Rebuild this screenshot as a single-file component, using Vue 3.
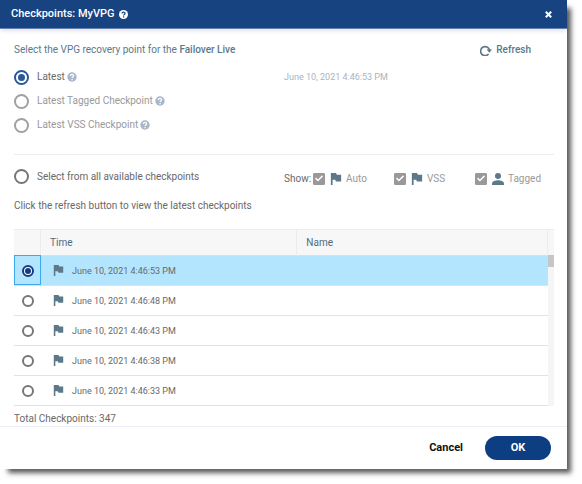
<script setup>
import { ref } from 'vue'

const FLAG = 'M1 0h6l1 2h5v8H7L6 8H3v6H1z'

const mode = ref('latest')
const selected = ref(0)

const latestOptions = [
  { id: 'latest', label: 'Latest', muted: false, time: 'June 10, 2021 4:46:53 PM' },
  { id: 'tagged', label: 'Latest Tagged Checkpoint', muted: true },
  { id: 'vss', label: 'Latest VSS Checkpoint', muted: true }
]

const filters = ref([
  { id: 'auto', label: 'Auto', icon: 'flag', on: true },
  { id: 'vss', label: 'VSS', icon: 'flag', on: true },
  { id: 'tagged', label: 'Tagged', icon: 'person', on: true }
])

const rows = [
  'June 10, 2021 4:46:53 PM',
  'June 10, 2021 4:46:48 PM',
  'June 10, 2021 4:46:43 PM',
  'June 10, 2021 4:46:38 PM',
  'June 10, 2021 4:46:33 PM'
]
</script>

<template>
  <main class="dialog">
    <header class="titlebar">
      <h1>Checkpoints: MyVPG</h1>
      <svg class="help" viewBox="0 0 10 10" aria-hidden="true">
        <circle cx="5" cy="5" r="5" fill="#fff" />
        <path d="M3.3 4C3.3 1.7 6.7 1.8 6.7 3.8C6.7 5 5.1 4.9 5.1 6.2M5.1 7v1.3" fill="none" stroke="#174480" stroke-width="1.4" />
      </svg>
      <button class="close" type="button" aria-label="Close">
        <svg viewBox="0 0 6 6"><path d="M.7.7l4.6 4.6M5.3.7L.7 5.3" stroke="#fff" stroke-width="1.7" /></svg>
      </button>
    </header>

    <div class="content">
      <div class="intro">
        <p>Select the VPG recovery point for the <b>Failover Live</b></p>
        <button class="refresh" type="button">
          <svg viewBox="0 0 12 11"><path d="M8.6 9A4.5 4.5 0 1 1 9.5 5" fill="none" stroke="#5c7889" stroke-width="1.7" /><path d="M6.6 4.6H12L9.4 7.7z" fill="#5c7889" /></svg>
          Refresh
        </button>
      </div>

      <div v-for="o in latestOptions" :key="o.id" class="option">
        <div class="pick">
          <input :id="o.id" v-model="mode" class="radio" :class="{ muted: o.muted }" type="radio" name="mode" :value="o.id" />
          <label :for="o.id" :class="{ muted: o.muted }">{{ o.label }}</label>
          <svg class="hint" viewBox="0 0 10 10" aria-hidden="true">
            <circle cx="5" cy="5" r="4.7" fill="#a9b8c8" />
            <path d="M3.4 3.9C3.4 1.8 6.6 1.9 6.6 3.8C6.6 4.9 5.1 4.9 5.1 6.1M5.1 7v1.2" fill="none" stroke="#fff" stroke-width="1.3" />
          </svg>
        </div>
        <time v-if="o.time">{{ o.time }}</time>
      </div>

      <div class="choose">
        <div class="pick">
          <input id="all" v-model="mode" class="radio" type="radio" name="mode" value="all" />
          <label for="all">Select from all available checkpoints</label>
        </div>
        <div class="filters">
          <span class="show">Show:</span>
          <div v-for="f in filters" :key="f.id" class="filter">
            <input :id="'f-' + f.id" v-model="f.on" class="check" type="checkbox" />
            <svg v-if="f.icon === 'flag'" class="flag" viewBox="0 0 14 14"><path :d="FLAG" /></svg>
            <svg v-else class="person" viewBox="0 0 12 12"><circle cx="6" cy="3" r="3" /><path d="M0 12V10.4C0 8.4 3.6 7.2 6 7.2S12 8.4 12 10.4V12z" /></svg>
            <label :for="'f-' + f.id">{{ f.label }}</label>
          </div>
        </div>
      </div>

      <p class="note">Click the refresh button to view the latest checkpoints</p>

      <div class="grid">
        <table>
          <thead>
            <tr><th class="sel"></th><th class="time">Time</th><th>Name</th></tr>
          </thead>
          <tbody>
            <tr v-for="(r, i) in rows" :key="r" :class="{ active: selected === i }">
              <td class="sel"><input v-model="selected" class="radio small" type="radio" name="row" :value="i" :aria-label="r" /></td>
              <td class="time">
                <div class="stamp">
                  <svg class="flag" viewBox="0 0 14 14"><path :d="FLAG" /></svg>
                  <span>{{ r }}</span>
                </div>
              </td>
              <td></td>
            </tr>
          </tbody>
        </table>
        <div class="scroll">
          <div class="corner"></div>
          <div class="thumb"></div>
        </div>
      </div>

      <p class="total">Total Checkpoints: 347</p>
    </div>

    <footer>
      <button class="cancel" type="button">Cancel</button>
      <button class="ok" type="button">OK</button>
    </footer>
  </main>
</template>

<style>
body {
  background: #fff;
}
</style>

<style scoped>
* {
  box-sizing: border-box;
}
.dialog {
  margin: 0 15px 15px 0;
  background: #fff;
  box-shadow: 6px 6px 5px -2px rgba(0, 0, 0, 0.65);
  font: 10px/14px Roboto, "Liberation Sans", sans-serif;
  color: #696969;
}
p,
h1 {
  margin: 0;
}
svg {
  display: block;
  flex: none;
}
button {
  padding: 0;
  border: 0;
  background: none;
  font: inherit;
  color: inherit;
  cursor: pointer;
}
.titlebar {
  display: flex;
  align-items: center;
  height: 29px;
  padding: 0 15px 0 11px;
  background: #174480;
  border-bottom: 1px solid #6482b4;
  box-shadow: 0 3px 4px -1px rgba(80, 50, 90, 0.14);
  color: #fff;
}
h1 {
  font-size: 11px;
  line-height: 14px;
  font-weight: 500;
}
.help {
  width: 9px;
  height: 9px;
  margin-left: 4px;
}
.close {
  margin-left: auto;
}
.close svg {
  width: 7px;
  height: 7px;
}
.content {
  padding: 13px 13px 0 14px;
}
.intro {
  display: flex;
  justify-content: space-between;
  align-items: center;
  height: 16px;
  padding-right: 23px;
  margin-bottom: 7px;
  color: #5c7889;
}
.intro b {
  font-weight: 500;
}
.refresh {
  display: flex;
  align-items: center;
  gap: 4px;
  font-weight: 500;
}
.refresh svg {
  width: 12px;
  height: 11px;
}
.option,
.choose {
  display: grid;
  grid-template-columns: 1fr 1fr;
  align-items: center;
}
.option {
  height: 24px;
}
.pick {
  display: flex;
  align-items: center;
}
.pick label {
  margin-left: 8px;
}
.pick label.muted {
  color: #999;
}
.hint {
  width: 10px;
  height: 10px;
  margin-left: 2px;
}
time {
  font-size: 9px;
  color: #a9b4c0;
}
.radio {
  appearance: none;
  display: grid;
  place-items: center;
  flex: none;
  width: 15px;
  height: 15px;
  margin: 0;
  border: 2px solid #777;
  border-radius: 50%;
  background: #fff;
}
.radio.muted {
  border-color: #a0a0a0;
}
.radio:checked {
  border-color: #2a5799;
}
.radio:checked::after {
  content: "";
  width: 7px;
  height: 7px;
  border-radius: 50%;
  background: #2a5799;
}
.radio.small {
  width: 12px;
  height: 12px;
}
.radio.small:checked {
  border-color: #133c80;
}
.radio.small:checked::after {
  width: 6px;
  height: 6px;
  background: #133c80;
}
.choose {
  height: 44px;
  margin-top: 17px;
  border-top: 1px solid #ececec;
}
.filters {
  display: grid;
  grid-template-columns: 28px 81px 81px auto;
  align-items: center;
  justify-content: start;
  padding-top: 4px;
}
.filter {
  display: flex;
  align-items: center;
  color: #999;
}
.check {
  appearance: none;
  display: grid;
  place-items: center;
  flex: none;
  width: 12px;
  height: 12px;
  margin: 0 5px 0 1px;
  border: 1px solid #999;
  border-radius: 1px;
}
.check:checked {
  background: #999;
}
.check:checked::after {
  content: "";
  width: 8px;
  height: 8px;
  background: #fff;
  clip-path: polygon(0 52%, 12% 38%, 36% 62%, 88% 10%, 100% 24%, 36% 88%);
}
.flag {
  width: 12px;
  height: 12px;
  fill: #5c7889;
}
.person {
  width: 12px;
  height: 12px;
  fill: #5c7889;
}
.filter label {
  margin-left: 4px;
}
.note {
  margin: 0 0 16px;
  padding-top: 1px;
}
.grid {
  display: flex;
}
table {
  flex: 1;
  border-collapse: separate;
  border-spacing: 0;
  table-layout: fixed;
  width: 100%;
}
th {
  height: 27px;
  padding: 0 9px;
  background: #f7f7f8;
  border-top: 1px solid #eee;
  border-bottom: 1px solid #dedede;
  border-right: 1px solid #ebebf2;
  text-align: left;
  font-weight: 400;
  color: #4f6b7c;
}
th.sel {
  width: 27px;
}
th.time {
  width: 48%;
}
td {
  height: 30px;
  padding: 0 12px;
  border-bottom: 1px solid #e2e2e2;
}
td.sel {
  position: relative;
  padding: 0 0 0 8px;
}
.active td {
  background: #b3e5fe;
}
.active td.sel::after {
  content: "";
  position: absolute;
  inset: -1px 0 0;
  border: 1px solid #3ba9ee;
  pointer-events: none;
}
.stamp {
  display: flex;
  align-items: center;
  gap: 8px;
  font-size: 9px;
}
.stamp .flag {
  width: 11px;
  height: 11px;
}
.scroll {
  width: 6px;
  background: #f5f5f5;
}
.corner {
  height: 26px;
  background: #f7f7f8;
  border-top: 1px solid #eee;
}
.thumb {
  height: 12px;
  background: #c6c6c6;
}
.total {
  padding-top: 6px;
}
footer {
  display: flex;
  justify-content: flex-end;
  align-items: center;
  gap: 22px;
  height: 43px;
  padding-right: 16px;
  border-top: 1px solid #ededf8;
  font-size: 11px;
  font-weight: 700;
}
.cancel {
  color: #111;
}
.ok {
  width: 66px;
  height: 24px;
  border-radius: 12px;
  background: #0e3e82;
  color: #fff;
}
</style>
